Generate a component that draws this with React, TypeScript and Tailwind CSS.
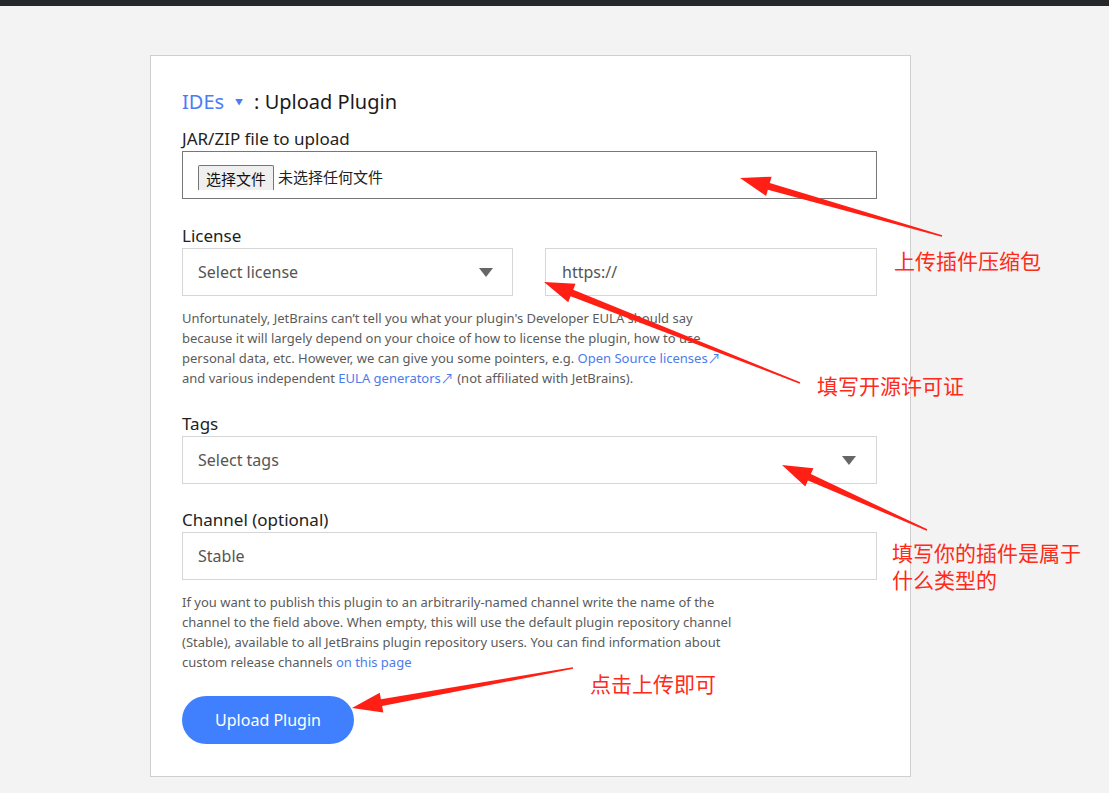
import React from "react";

const sans = { fontFamily: '"Noto Sans", "Noto Sans CJK SC", sans-serif' };

type ArrowProps = { x1: number; y1: number; x2: number; y2: number };

// tapered red annotation arrow, tail (x1,y1) -> tip (x2,y2)
const Arrow = ({ x1, y1, x2, y2 }: ArrowProps) => {
  const dx = x2 - x1;
  const dy = y2 - y1;
  const len = Math.hypot(dx, dy);
  const ux = dx / len;
  const uy = dy / len;
  const nx = -uy;
  const ny = ux;
  const headLen = 30;
  const headW = 10;
  const bx = x2 - ux * headLen;
  const by = y2 - uy * headLen;
  const pts = [
    [x1 + nx * 0.8, y1 + ny * 0.8],
    [bx + nx * 3.5, by + ny * 3.5],
    [bx + nx * headW, by + ny * headW],
    [x2, y2],
    [bx - nx * headW, by - ny * headW],
    [bx - nx * 3.5, by - ny * 3.5],
    [x1 - nx * 0.8, y1 - ny * 0.8],
  ]
    .map((p) => p.join(","))
    .join(" ");
  return <polygon points={pts} fill="#ff1f14" />;
};

const Caret = () => (
  <svg width="14" height="9" viewBox="0 0 14 9">
    <path d="M0 0h14L7 9z" fill="#666" />
  </svg>
);

const Link = ({ children }: { children: React.ReactNode }) => (
  <span className="text-[#4b7bec]">{children}</span>
);

export default function App() {
  return (
    <div className="relative min-h-[793px] bg-[#f2f3f2]" style={sans}>
      <div className="h-[6px] bg-[#26272b]" />
      <div className="ml-[150px] mt-[49px] w-[761px] h-[722px] border border-[#cfcfcf] bg-white pl-[31px] pr-[33px] pt-[32px]">
        <div className="flex items-center h-[28px] text-[20px] text-[#1a1a1a]">
          <span className="text-[#4a7cf7]">IDEs</span>
          <span className="text-[#4a7cf7] text-[8px] ml-[11px] mr-[11px]">▼</span>
          <span>: Upload Plugin</span>
        </div>

        <div className="mt-[11px] text-[17px] leading-[24px] text-[#222]">JAR/ZIP file to upload</div>
        <div className="h-[48px] border border-[#777] flex items-end pl-[15px] pb-[8px]">
          <div
            className="flex items-center"
            style={{ fontFamily: '"Noto Sans CJK SC", sans-serif' }}
          >
            <span className="h-[25px] px-[7px] bg-[#efefef] border border-[#767676] border-b-0 rounded-t-[2px] text-[15px] leading-[25px] text-[#111]">
              选择文件
            </span>
            <span className="ml-[4px] text-[15px] text-[#222]">未选择任何文件</span>
          </div>
        </div>

        <div className="mt-[25px] text-[17px] leading-[24px] text-[#222]">License</div>
        <div className="flex gap-[32px]">
          <div className="w-[331px] h-[48px] border border-[#d6d6d6] flex items-center justify-between pl-[15px] pr-[19px] text-[16px] text-[#555]">
            <span>Select license</span>
            <Caret />
          </div>
          <div className="flex-1 h-[48px] border border-[#d6d6d6] flex items-center pl-[16px] text-[16px] text-[#555]">
            https://
          </div>
        </div>
        <div className="mt-[12px] text-[13px] leading-[20px] text-[#5b5b5b] whitespace-nowrap">
          <div>Unfortunately, JetBrains can’t tell you what your plugin's Developer EULA should say</div>
          <div>because it will largely depend on your choice of how to license the plugin, how to use</div>
          <div>
            personal data, etc. However, we can give you some pointers, e.g. <Link>Open Source licenses↗</Link>
          </div>
          <div>
            and various independent <Link>EULA generators↗</Link> (not affiliated with JetBrains).
          </div>
        </div>

        <div className="mt-[24px] text-[17px] leading-[24px] text-[#222]">Tags</div>
        <div className="h-[48px] border border-[#d6d6d6] flex items-center justify-between pl-[15px] pr-[20px] text-[16px] text-[#555]">
          <span>Select tags</span>
          <Caret />
        </div>

        <div className="mt-[24px] text-[17px] leading-[24px] text-[#222]">Channel (optional)</div>
        <div className="h-[48px] border border-[#d6d6d6] flex items-center pl-[15px] text-[16px] text-[#555]">
          Stable
        </div>
        <div className="mt-[12px] text-[13px] leading-[20px] text-[#5b5b5b] whitespace-nowrap">
          <div>If you want to publish this plugin to an arbitrarily-named channel write the name of the</div>
          <div>channel to the field above. When empty, this will use the default plugin repository channel</div>
          <div>(Stable), available to all JetBrains plugin repository users. You can find information about</div>
          <div>
            custom release channels <Link>on this page</Link>
          </div>
        </div>

        <button className="mt-[24px] w-[172px] h-[48px] rounded-full bg-[#4080ff] text-white text-[16px]">
          Upload Plugin
        </button>
      </div>

      <svg className="absolute inset-0 pointer-events-none" width="1109" height="793">
        <Arrow x1={942} y1={236} x2={740} y2={178} />
        <Arrow x1={800} y1={383} x2={544} y2={282} />
        <Arrow x1={927} y1={530} x2={782} y2={465} />
        <Arrow x1={573} y1={668} x2={352} y2={708} />
      </svg>

      <div
        className="absolute inset-0 pointer-events-none text-[21px] leading-[24px] text-[#ff2a1a]"
        style={{ fontFamily: '"Noto Sans CJK SC", sans-serif' }}
      >
        <div className="absolute left-[894px] top-[248px]">上传插件压缩包</div>
        <div className="absolute left-[817px] top-[373px]">填写开源许可证</div>
        <div className="absolute left-[892px] top-[540px]">填写你的插件是属于</div>
        <div className="absolute left-[892px] top-[567px]">什么类型的</div>
        <div className="absolute left-[590px] top-[671px]">点击上传即可</div>
      </div>
    </div>
  );
}
